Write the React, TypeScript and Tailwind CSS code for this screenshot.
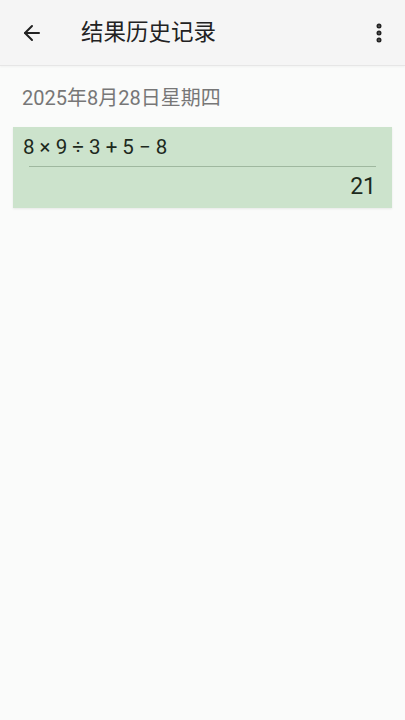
import { ArrowLeft, EllipsisVertical } from "lucide-react";

export default function App() {
  return (
    <div
      className="min-h-[720px] w-full bg-[#fafbfa] flex flex-col"
      style={{ fontFamily: 'Roboto, "Noto Sans CJK SC", sans-serif' }}
    >
      {/* Toolbar */}
      <div className="h-[66px] bg-[#f5f5f5] border-b border-[#e6e6e6] flex items-center pl-[20px] pr-[14px] shadow-[0_1px_2px_rgba(0,0,0,0.04)]">
        <ArrowLeft className="w-[24px] h-[24px] text-[#222]" strokeWidth={2} />
        <h1 className="ml-[37px] text-[22.5px] text-[#222] leading-none">结果历史记录</h1>
        <div className="flex-1" />
        <EllipsisVertical className="w-[24px] h-[24px] text-[#222]" strokeWidth={3} />
      </div>

      {/* Date */}
      <div className="px-[22px] pt-[20px] pb-[16px] text-[20px] text-[#777] leading-[25px]">
        2025年8月28日星期四
      </div>

      {/* Record */}
      <div className="mx-[13px] bg-[#cce3cc] pt-[9px] pb-[8px] shadow-[0_1px_2px_rgba(0,0,0,0.08)]">
        <div className="px-[10px] text-[20.5px] text-[#1d2a1d] leading-[23px]">8 × 9 ÷ 3 + 5 − 8</div>
        <div className="mx-[16px] mt-[7px] border-t border-[#9fb89f]" />
        <div className="px-[16px] mt-[6px] text-right text-[23px] text-[#1d2a1d] leading-[27px]">21</div>
      </div>
    </div>
  );
}
